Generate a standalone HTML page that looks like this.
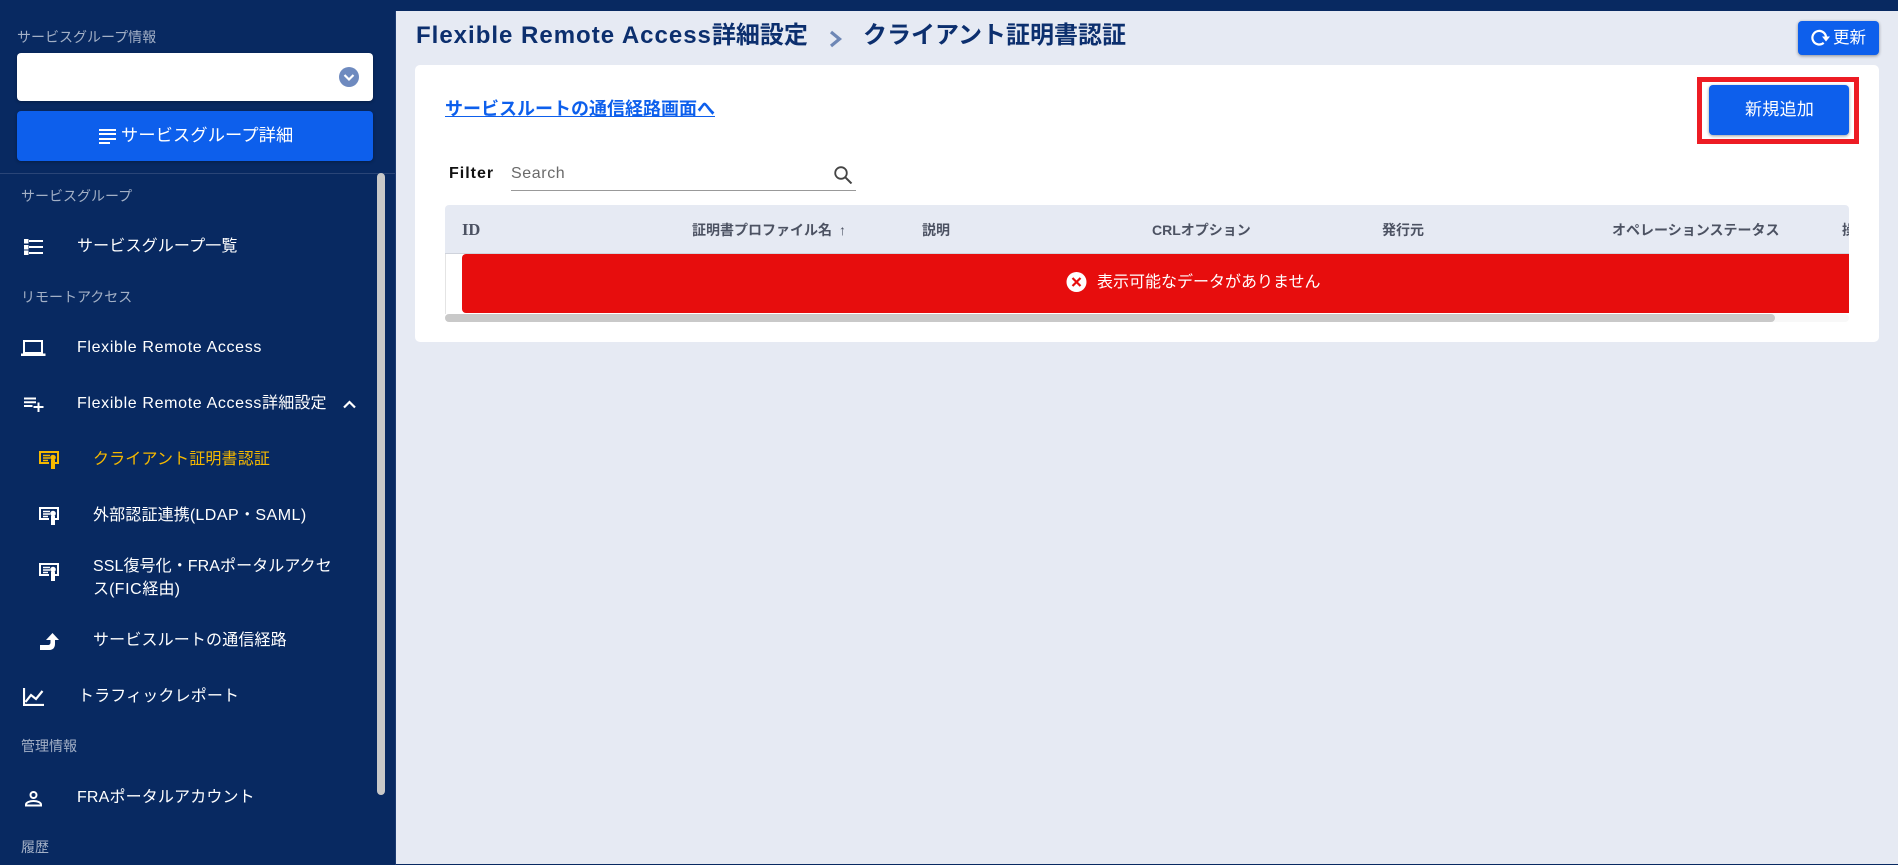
<!DOCTYPE html>
<html lang="ja">
<head>
<meta charset="utf-8">
<title>クライアント証明書認証</title>
<style>
*{box-sizing:border-box}
html,body{margin:0;padding:0}
body{width:1898px;height:865px;overflow:hidden;position:relative;background:#e6eaf3;font-family:"Liberation Sans","Noto Sans CJK JP",sans-serif;color:#fff}
.a{position:absolute}
.t{position:absolute;white-space:nowrap;line-height:24px}
.lbl{font-size:14px;color:#a3b0c6}
.m{font-size:16px;color:#fff;letter-spacing:.15px}
.lat{letter-spacing:.65px}
.th{font-size:14px;font-weight:700;color:#4c5262;line-height:20px;top:220px}
svg{position:absolute;display:block}
</style>
</head>
<body>
<div class="a" style="left:0;top:0;width:1898px;height:11px;background:#082961"></div>
<div class="a" style="left:0;top:0;width:396px;height:865px;background:#082961"></div>
<div class="a" style="left:395px;top:11px;width:1px;height:854px;background:#1c3b72"></div>
<div class="a" style="left:396px;top:864px;width:1502px;height:1px;background:#082961"></div>

<!-- sidebar header -->
<div class="t lbl" style="left:17px;top:25px">サービスグループ情報</div>
<div class="a" style="left:17px;top:53px;width:356px;height:48px;background:#fff;border-radius:4px;box-shadow:0 1px 3px rgba(0,0,0,.3)"></div>
<svg style="left:339px;top:67px" width="20" height="20" viewBox="0 0 20 20"><circle cx="10" cy="10" r="10" fill="#6e8abf"/><path d="M5.500 8l4.500 4.500 4.500-4.500" fill="none" stroke="#fff" stroke-width="2.200"/></svg>
<div class="a" style="left:17px;top:111px;width:356px;height:50px;background:#0d5fec;border-radius:4px;box-shadow:0 1px 3px rgba(0,0,0,.3)"></div>
<svg style="left:99px;top:129px" width="17" height="15" viewBox="0 0 17 15"><path d="M0 0h17v2H0zM0 4h17v2H0zM0 9h17v2H0zM0 13h11v2H0z" fill="#fff"/></svg>
<div class="t" style="left:121px;top:123px;font-size:17.200px;color:#fff;letter-spacing:.15px">サービスグループ詳細</div>
<div class="a" style="left:0;top:173px;width:395px;height:1px;background:#2a4577"></div>
<div class="a" style="left:377px;top:173px;width:8px;height:622px;background:#c8c8c8;border-radius:4px"></div>

<!-- menu -->
<div class="t lbl" style="left:21px;top:184px">サービスグループ</div>
<svg style="left:24px;top:239px" width="19" height="16" viewBox="0 0 19 16"><path d="M0 0h4.500v4.500H0zM0 6h4.500v4.500H0zM0 11.500h4.500v4.500H0z" fill="#fff"/><path d="M5 2h14M5 8h14M5 14h14" stroke="#fff" stroke-width="2" fill="none"/></svg>
<div class="t m" style="left:77px;top:235px">サービスグループ一覧</div>

<div class="t lbl" style="left:21px;top:285px">リモートアクセス</div>
<svg style="left:21px;top:340px" width="25" height="16" viewBox="0 0 25 16"><path d="M3 1h18v12H3z" fill="none" stroke="#fff" stroke-width="2"/><path d="M0 13.500h24.500v2.500H0z" fill="#fff"/></svg>
<div class="t m lat" style="left:77px;top:336px">Flexible Remote Access</div>

<svg style="left:24px;top:397px" width="20" height="15" viewBox="0 0 20 15"><path d="M0 1.500h12M0 5.200h12M0 9h8.500M9.500 10h10M14.500 5.500V15" stroke="#fff" stroke-width="2" fill="none"/></svg>
<div class="t m" style="left:77px;top:392px"><span class="lat">Flexible Remote Access</span>詳細設定</div>
<svg style="left:343px;top:400px" width="13" height="9" viewBox="0 0 13 9"><path d="M1 7.500l5.500-5.500 5.500 5.500" fill="none" stroke="#fff" stroke-width="2.200"/></svg>

<svg style="left:39px;top:451px" width="20" height="18" viewBox="0 0 20 18"><path d="M16 12h3V1H1v11h9" fill="none" stroke="#f5b800" stroke-width="2"/><path d="M4 4.500h7M4 7h7M4 9.500h5" stroke="#f5b800" stroke-width="1.400" fill="none"/><circle cx="14" cy="6.500" r="2.800" fill="#f5b800"/><path d="M12 9h4v9h-4z" fill="#f5b800"/></svg>
<div class="t m" style="left:93px;top:448px;color:#f5b800">クライアント証明書認証</div>

<svg style="left:39px;top:507px" width="20" height="18" viewBox="0 0 20 18"><path d="M16 12h3V1H1v11h9" fill="none" stroke="#fff" stroke-width="2"/><path d="M4 4.500h7M4 7h7M4 9.500h5" stroke="#fff" stroke-width="1.400" fill="none"/><circle cx="14" cy="6.500" r="2.800" fill="#fff"/><path d="M12 9h4v9h-4z" fill="#fff"/></svg>
<div class="t m" style="left:93px;top:504px">外部認証連携(<span style="letter-spacing:.5px">LDAP</span>・<span style="letter-spacing:.5px">SAML</span>)</div>

<svg style="left:39px;top:563px" width="20" height="18" viewBox="0 0 20 18"><path d="M16 12h3V1H1v11h9" fill="none" stroke="#fff" stroke-width="2"/><path d="M4 4.500h7M4 7h7M4 9.500h5" stroke="#fff" stroke-width="1.400" fill="none"/><circle cx="14" cy="6.500" r="2.800" fill="#fff"/><path d="M12 9h4v9h-4z" fill="#fff"/></svg>
<div class="t m" style="left:93px;top:555px;letter-spacing:.08px">SSL復号化・FRAポータルアクセ</div>
<div class="t m" style="left:93px;top:578px">ス(<span style="letter-spacing:.65px">FIC</span>経由)</div>

<svg style="left:40px;top:633px" width="20" height="18" viewBox="0 0 20 18"><path d="M0 12h8c1.500 0 2.500-1 2.500-2.500V7H6L12.500 0 19 7h-4v4c0 3.500-2 6-5.500 6H0z" fill="#fff"/></svg>
<div class="t m" style="left:93px;top:629px">サービスルートの通信経路</div>

<svg style="left:23px;top:688px" width="21" height="18" viewBox="0 0 21 18"><path d="M1 0v17h20" fill="none" stroke="#fff" stroke-width="2.200"/><path d="M2.500 14L8 7l5 4 6.500-8" fill="none" stroke="#fff" stroke-width="2.200"/></svg>
<div class="t m" style="left:78px;top:685px">トラフィックレポート</div>

<div class="t lbl" style="left:21px;top:734px">管理情報</div>
<svg style="left:25px;top:791px" width="17" height="16" viewBox="0 0 17 16"><circle cx="8.500" cy="4" r="3" fill="none" stroke="#fff" stroke-width="2"/><path d="M1 14.500v-1c0-2 3.500-3.500 7.500-3.500s7.500 1.500 7.500 3.500v1z" fill="none" stroke="#fff" stroke-width="2"/></svg>
<div class="t m" style="left:77px;top:786px">FRAポータルアカウント</div>

<div class="t lbl" style="left:21px;top:835px">履歴</div>

<!-- title -->
<div class="t" style="left:416px;top:21px;font-size:24px;font-weight:700;color:#0c2f6e;line-height:30px"><span style="letter-spacing:1px">Flexible Remote Access</span>詳細設定</div>
<svg style="left:829px;top:30px" width="14" height="18" viewBox="0 0 14 18"><path d="M2 2l8.500 7L2 16" fill="none" stroke="#6e87b5" stroke-width="3.200"/></svg>
<div class="t" style="left:863px;top:21px;font-size:24px;font-weight:700;color:#0c2f6e;line-height:30px">クライアント証明書認証</div>

<!-- refresh -->
<div class="a" style="left:1798px;top:21px;width:81px;height:34px;background:#0d5fec;border-radius:4px;box-shadow:0 1px 3px rgba(0,0,0,.4)"></div>
<svg style="left:1811px;top:29px" width="20" height="18" viewBox="0 0 20 18"><path d="M12.700 13.800A6.800 6.800 0 1 1 15 9" fill="none" stroke="#fff" stroke-width="2.200"/><path d="M11 7.500h8l-4 5z" fill="#fff"/></svg>
<div class="t" style="left:1833px;top:26px;font-size:16.500px;color:#fff">更新</div>

<!-- card -->
<div class="a" style="left:415px;top:65px;width:1464px;height:277px;background:#fff;border-radius:5px"></div>
<div class="t" style="left:445px;top:97px;font-size:18px;font-weight:700;color:#0d5fec;text-decoration:underline">サービスルートの通信経路画面へ</div>

<div class="a" style="left:1697px;top:77px;width:162px;height:67px;border:5px solid #ed1c24"></div>
<div class="a" style="left:1709px;top:85px;width:140px;height:50px;background:#0d5fec;border-radius:4px;box-shadow:0 1px 3px rgba(0,0,0,.4)"></div>
<div class="t" style="left:1745px;top:98px;font-size:17px;color:#fff;letter-spacing:.3px">新規追加</div>

<div class="t" style="left:449px;top:162px;font-size:16px;font-weight:700;color:#111;letter-spacing:1px">Filter</div>
<div class="t" style="left:511px;top:162px;font-size:16px;color:#6a6a6a;letter-spacing:.6px">Search</div>
<div class="a" style="left:511px;top:190px;width:345px;height:1px;background:#999"></div>
<svg style="left:834px;top:166px" width="19" height="18" viewBox="0 0 19 18"><circle cx="7" cy="7" r="5.800" fill="none" stroke="#444" stroke-width="1.800"/><path d="M11.200 11.200l6.300 6.300" stroke="#444" stroke-width="2" fill="none"/></svg>

<!-- table -->
<div class="a" style="left:445px;top:205px;width:1404px;height:49px;background:#e6eaf3;border-radius:4px 4px 0 0;border-bottom:1px solid #cfd3dc;overflow:hidden">
  <div class="t th" style="left:17px;top:15px;font-family:'Liberation Serif',serif;font-size:16.500px">ID</div>
  <div class="t th" style="left:247px;top:15px">証明書プロファイル名<span style="font-weight:400;font-size:14px;margin-left:7px">↑</span></div>
  <div class="t th" style="left:477px;top:15px">説明</div>
  <div class="t th" style="left:707px;top:15px">CRLオプション</div>
  <div class="t th" style="left:937px;top:15px">発行元</div>
  <div class="t th" style="left:1167px;top:15px">オペレーションステータス</div>
  <div class="t th" style="left:1397px;top:15px">操作</div>
</div>
<div class="a" style="left:445px;top:254px;width:1px;height:60px;background:#e4e4e4"></div>
<div class="a" style="left:462px;top:254px;width:1387px;height:59px;background:#e70d0d;border-radius:4px 0 0 4px"></div>
<svg style="left:1066px;top:272px" width="21" height="20" viewBox="0 0 21 20"><circle cx="10.500" cy="10" r="10" fill="#fff"/><path d="M6.500 6l8 8M14.500 6l-8 8" stroke="#e70d0d" stroke-width="2.200" fill="none"/></svg>
<div class="t" style="left:1097px;top:271px;font-size:16px;color:#fff">表示可能なデータがありません</div>
<div class="a" style="left:445px;top:314px;width:1404px;height:8px;background:#f8f8f8;border-radius:4px"></div>
<div class="a" style="left:445px;top:314px;width:1330px;height:8px;background:#c9c9c9;border-radius:4px"></div>
</body>
</html>
